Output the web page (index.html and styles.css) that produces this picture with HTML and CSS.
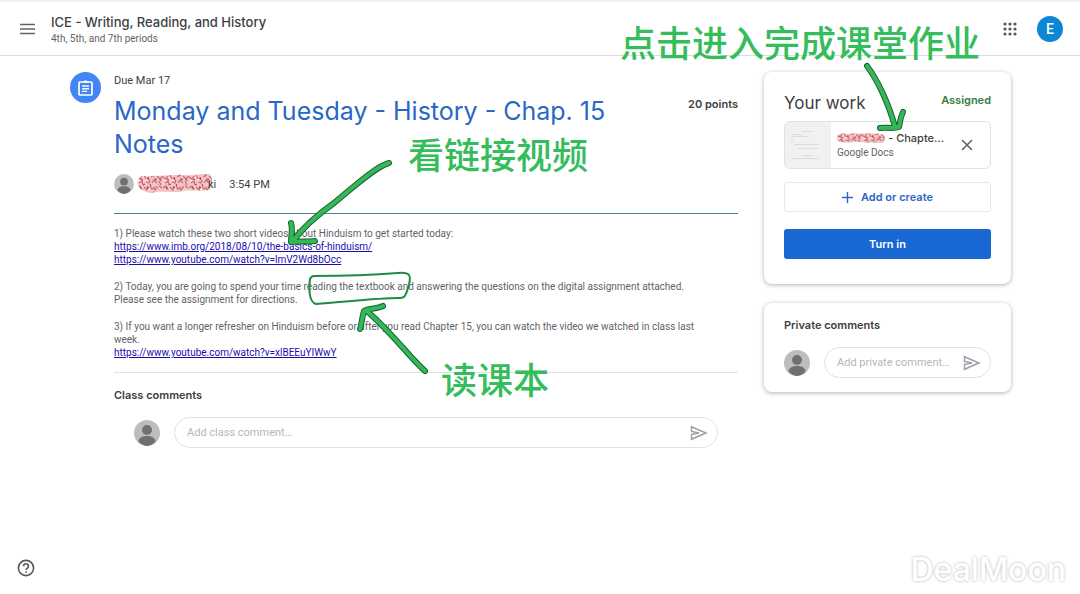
FILE: index.html
```html
<!DOCTYPE html>
<html lang="en">
  <head>
    <meta charset="utf-8">
    <title>ICE - Writing, Reading, and History</title>
    <link rel="stylesheet" href="styles.css">
  </head>
  <body>
    <svg class="defs" aria-hidden="true">
      <defs>
        <pattern id="scribble" width="26" height="17" patternUnits="userSpaceOnUse">
          <rect width="26" height="17" fill="#f2c6c9"/>
          <path d="M0 3l3 2 2-3M7 1l2 4 3-1M14 3l3-2 1 4M20 2l3 3 3-3M2 9l3-2 1 4M9 8l3 1 1-3M15 9l2-3 3 3M22 7l2 4M0 14l3-2 2 4M7 13l3 3 1-4M13 12l2 3 3-2M19 15l2-4 4 3" fill="none" stroke="#d3686d" stroke-width="1.3"/>
          <path d="M4 5l2 1M11 3l1 3M18 6l2-1M6 11l2-1M13 10l1 2M23 5l1 2M3 15l1-2M17 15l2 1M10 13l2 1" fill="none" stroke="#9c3b40"/>
          <path d="M1 6l2 1M8 6l2-1M17 3l2 0M20 11l2 1M11 16l2-1M6 3l1 1" fill="none" stroke="#fff"/>
        </pattern>
        <symbol id="avatar" viewBox="0 0 26 26">
          <circle cx="13" cy="13" r="13" fill="#bdbdbd"/>
          <circle cx="13" cy="10" r="5" fill="#707070"/>
          <path d="M4.500 21.500c0-7.300 17-7.300 17 0A13 13 0 0 1 13 26a13 13 0 0 1-8.500-4.500z" fill="#707070"/>
        </symbol>
        <symbol id="send" viewBox="0 0 18 16">
          <path d="M1.500 1.700L16 8 1.500 14.300V9.500L9 8 1.500 6.500z" fill="none" stroke="currentColor" stroke-width="1.500"/>
        </symbol>
      </defs>
    </svg>

    <header class="topbar">
      <button class="icon-btn" aria-label="Main menu">
        <svg width="16" height="12" viewBox="0 0 16 12"><path d="M0 1.500h15M0 6h15M0 10.500h15" stroke="#5f6368" stroke-width="1.700"/></svg>
      </button>
      <div class="course">
        <h2>ICE - Writing, Reading, and History</h2>
        <p>4th, 5th, and 7th periods</p>
      </div>
      <button class="icon-btn" aria-label="Google apps">
        <svg width="14" height="14" viewBox="0 0 14 14" fill="#55595e">
          <circle cx="2" cy="2" r="1.600"/><circle cx="7" cy="2" r="1.600"/><circle cx="12" cy="2" r="1.600"/>
          <circle cx="2" cy="7" r="1.600"/><circle cx="7" cy="7" r="1.600"/><circle cx="12" cy="7" r="1.600"/>
          <circle cx="2" cy="12" r="1.600"/><circle cx="7" cy="12" r="1.600"/><circle cx="12" cy="12" r="1.600"/>
        </svg>
      </button>
      <button class="account" aria-label="Account">E</button>
    </header>

    <main class="page">
      <div class="badge">
        <svg width="17" height="18" viewBox="0 0 17 18">
          <rect x="2" y="3" width="13" height="13" rx="1" fill="none" stroke="#fff" stroke-width="1.700"/>
          <path d="M5.500 3.500V2.200h1.600a1.500 1.500 0 0 1 2.800 0h1.600v1.300z" fill="#fff"/>
          <path d="M5 7h7M5 9.700h7M5 12.400h5" stroke="#fff" stroke-width="1.400"/>
        </svg>
      </div>

      <article class="assignment">
        <p class="due">Due Mar 17</p>
        <div class="title-row">
          <h1>Monday and Tuesday - History - Chap. 15 Notes</h1>
          <span class="points">20 points</span>
        </div>
        <div class="byline">
          <svg class="avatar-small" viewBox="0 0 26 26"><use href="#avatar"/></svg>
          <span class="teacher"><svg width="75" height="20" viewBox="0 0 75 20"><path d="M1 6C4 0 8 3 14 2c12 0 22-2 33-1 9 1 18-2 25-1 4 2 4 12 0 16-12 2-20-1-31 2-10 0-20-1-28 1C6 18-2 12 1 6z" fill="url(#scribble)"/></svg>ki</span>
          <span>3:54 PM</span>
        </div>

        <div class="instructions">
          <p>1) Please watch these two short videos about Hinduism to get started today:<br>
            <a href="#">https://www.imb.org/2018/08/10/the-basics-of-hinduism/</a><br>
            <a href="#">https://www.youtube.com/watch?v=lmV2Wd8bOcc</a></p>
          <p>2) Today, you are going to spend your time reading the textbook and answering the questions on the digital assignment attached. Please see the assignment for directions.</p>
          <p>3) If you want a longer refresher on Hinduism before or after you read Chapter 15, you can watch the video we watched in class last week.<br>
            <a href="#">https://www.youtube.com/watch?v=xlBEEuYIWwY</a></p>
        </div>

        <h3>Class comments</h3>
        <form class="comment class-comment">
          <svg class="avatar" viewBox="0 0 26 26"><use href="#avatar"/></svg>
          <div class="comment-box">
            <input type="text" aria-label="Add class comment" placeholder="Add class comment…">
            <button type="button" class="send" aria-label="Post"><svg width="18" height="16"><use href="#send"/></svg></button>
          </div>
        </form>
      </article>

      <aside class="side">
        <section class="card work">
          <div class="work-head">
            <h2>Your work</h2>
            <span class="status">Assigned</span>
          </div>
          <div class="attachment">
            <svg class="thumb" width="46" height="46" viewBox="0 0 46 46">
              <rect width="46" height="46" fill="#f1f1f1"/>
              <path d="M17 9.500h12M6 12.500h10M6 14.500h18M6 17.500h3M6 20.500h2M9 22.500h25M13 26.500h20M17 33.500h11M6 36.500h28" stroke="#dcdcdc"/>
            </svg>
            <div class="file">
              <a href="#"><svg width="50" height="12" viewBox="0 0 50 12"><path d="M1 3c5-4 10 0 16-2 10 1 20-1 30 1 4 2 3 7 0 9-10 0-18 0-27-1-7 1-12 1-18 0-3-2-3-5-1-7z" fill="url(#scribble)"/></svg> - Chapte...</a>
              <p>Google Docs</p>
            </div>
            <button class="icon-btn remove" aria-label="Remove attachment">
              <svg width="12" height="12" viewBox="0 0 12 12"><path d="M1 1l10 10M11 1L1 11" stroke="#5f6368" stroke-width="1.600"/></svg>
            </button>
          </div>
          <button class="btn add">
            <svg width="11" height="11" viewBox="0 0 11 11"><path d="M5.500 0v11M0 5.500h11" stroke="#2a66c4" stroke-width="1.400"/></svg>
            Add or create
          </button>
          <button class="btn turn-in">Turn in</button>
        </section>

        <section class="card private">
          <h3>Private comments</h3>
          <form class="comment">
            <svg class="avatar" viewBox="0 0 26 26"><use href="#avatar"/></svg>
            <div class="comment-box">
              <input type="text" aria-label="Add private comment" placeholder="Add private comment…">
              <button type="button" class="send" aria-label="Post"><svg width="18" height="16"><use href="#send"/></svg></button>
            </div>
          </form>
        </section>
      </aside>
    </main>

    <footer class="footer">
      <button class="icon-btn" aria-label="Help">
        <svg width="18" height="18" viewBox="0 0 18 18" fill="none" stroke="#55595e" stroke-width="1.600">
          <circle cx="9" cy="9" r="7.600"/>
          <path d="M6.600 7.200c0-3.200 4.900-3.200 4.900 0 0 1.800-2.400 1.900-2.400 3.800M9.100 12.200v1.600"/>
        </svg>
      </button>
      <span class="watermark">DealMoon</span>
    </footer>

    <!-- hand-drawn notes lying over the page -->
    <svg class="notes" width="1080" height="594" viewBox="0 0 1080 594">
      <g class="note-text">
        <text x="620" y="57">点击进入完成课堂作业</text>
        <text x="408" y="169">看链接视频</text>
        <text x="441" y="394">读课本</text>
      </g>
      <g class="outline">
        <path d="M389 163C376 166 350 190 334 203C320 213 304 226 293 241M291 223C293 229 291 235 291 242C299 241 307 242 315 241"/>
        <path d="M867 66C877 79 889 104 895 127M903 112C900 118 900 123 899 127C893 129 887 127 880 128"/>
        <path d="M425 371C411 359 395 336 367 311M383 306C377 309 369 308 364 311C362 317 362 323 360 329"/>
      </g>
      <g class="ink">
        <path d="M389 163C376 166 350 190 334 203C320 213 304 226 293 241M291 223C293 229 291 235 291 242C299 241 307 242 315 241"/>
        <path d="M867 66C877 79 889 104 895 127M903 112C900 118 900 123 899 127C893 129 887 127 880 128"/>
        <path d="M425 371C411 359 395 336 367 311M383 306C377 309 369 308 364 311C362 317 362 323 360 329"/>
      </g>
      <path class="ring" d="M313 276C338 276 374 275 398 273C411 272 411 276 409 285C406 294 406 298 399 298C377 298 344 302 316 304C308 302 309 285 310 279Q311 276 315 276"/>
    </svg>
  </body>
</html>
```
FILE: styles.css
```css
* { box-sizing: border-box; }
body {
  margin: 0;
  min-height: 100vh;
  display: flex;
  flex-direction: column;
  position: relative;
  background: #fff;
  color: #3c4043;
  font-family: Roboto, "Noto Sans CJK SC", sans-serif;
  font-size: 11px;
}
h1, h2, h3, p { margin: 0; font-weight: 400; }
h1, h2, h3, .points, .status, .btn, .file a { font-family: Inter, "Open Sans", sans-serif; }
button, input { font-family: inherit; font-size: inherit; border: none; background: none; padding: 0; }
button { cursor: pointer; }
svg { display: block; }
.defs { position: absolute; width: 0; height: 0; }

/* top bar */
.topbar {
  display: flex;
  align-items: center;
  height: 56px;
  padding: 0 17px 0 20px;
  border-top: 2px solid #f1f3f4;
  border-bottom: 1px solid #dadce0;
}
.icon-btn { display: flex; align-items: center; justify-content: center; }
.course { flex: 1; margin-left: 15px; padding-top: 3px; }
.course h2 { font-size: 13px; line-height: 17px; font-weight: 500; }
.course p { font-size: 10px; line-height: 15px; color: #5f6368; }
.account {
  width: 26px;
  height: 26px;
  margin-left: 20px;
  border-radius: 50%;
  background: #0d87d4;
  color: #fff;
  font-size: 14px;
  font-weight: 500;
}

/* page columns */
.page {
  display: grid;
  grid-template-columns: 31px minmax(0, 1fr) 247px;
  padding: 16px 69px 0 70px;
}
.badge {
  display: flex;
  align-items: center;
  justify-content: center;
  width: 31px;
  height: 31px;
  border-radius: 50%;
  background: #4285f4;
}
.assignment { margin: 0 26px 0 13px; }
.due { padding-top: 1px; font-size: 11px; line-height: 16px; }
.title-row { display: flex; align-items: flex-start; padding-top: 6px; }
.title-row h1 { flex: 1; padding-right: 60px; font-size: 25px; line-height: 33px; color: #2967c8; }
.points { padding-top: 1px; line-height: 16px; font-weight: 600; }
.byline {
  display: flex;
  align-items: center;
  gap: 13px;
  height: 53px;
  padding-bottom: 6px;
  border-bottom: 1px solid #4f8494;
}
.avatar-small { width: 20px; height: 20px; margin-right: -10px; }
.teacher { display: flex; align-items: center; }
.teacher svg { margin-right: -4px; }

.instructions {
  padding: 13px 32px 13px 0;
  border-bottom: 1px solid #dfe1e3;
  font-size: 10px;
  line-height: 13px;
  color: #5f6368;
}
.instructions p + p { margin-top: 14px; }
.instructions a { color: #1a0dab; }

h3 { font-size: 11px; line-height: 16px; font-weight: 600; }
.assignment h3 { margin-top: 14px; }

/* comments */
.comment { display: flex; align-items: center; gap: 14px; }
.class-comment { padding: 14px 20px 0; }
.avatar { width: 26px; height: 26px; flex: none; }
.comment-box {
  display: flex;
  align-items: center;
  flex: 1;
  min-width: 0;
  height: 31px;
  padding: 0 9px 0 12px;
  border: 1px solid #dfe1e3;
  border-radius: 16px;
}
.comment-box input { flex: 1; min-width: 0; outline: none; }
.comment-box input::placeholder { color: #b4b7bb; }
.send { color: #9aa0a6; }

/* side cards */
.card {
  padding: 20px;
  border-radius: 8px;
  background: #fff;
  box-shadow: 0 1px 4px rgba(60, 64, 67, .4);
}
.work { padding-bottom: 25px; }
.work-head { display: flex; justify-content: space-between; }
.work-head h2 { font-size: 17px; line-height: 22px; }
.status { line-height: 16px; font-weight: 600; color: #3a7d3e; }
.attachment {
  display: flex;
  align-items: center;
  height: 48px;
  margin-top: 7px;
  border: 1px solid #dfe1e3;
  border-radius: 6px;
  overflow: hidden;
}
.thumb { flex: none; }
.file { flex: 1; min-width: 0; padding-left: 6px; }
.file a {
  display: flex;
  align-items: center;
  gap: 3px;
  line-height: 15px;
  font-weight: 500;
  color: #3c4043;
  text-decoration: none;
  white-space: nowrap;
}
.file p { font-size: 10px; line-height: 14px; color: #5f6368; }
.remove { width: 46px; height: 46px; }
.btn {
  display: flex;
  align-items: center;
  justify-content: center;
  gap: 8px;
  width: 100%;
  height: 30px;
  border-radius: 3px;
  font-size: 11px;
  font-weight: 600;
}
.add { margin-top: 13px; border: 1px solid #e4e6e8; color: #2a66c4; }
.turn-in { margin-top: 17px; background: #1967d2; color: #fff; }
.private { margin-top: 19px; padding: 14px 20px; }
.private .comment { margin-top: 14px; }

/* footer */
.footer {
  display: flex;
  align-items: flex-start;
  justify-content: space-between;
  margin-top: auto;
  padding: 0 14px 4px 17px;
}
.footer .icon-btn { margin-top: 10px; }
.watermark {
  font-family: Inter, sans-serif;
  font-size: 32px;
  line-height: 41px;
  font-weight: 500;
  color: #fff;
  text-shadow: 0 0 3px rgba(0, 0, 0, .3);
}

/* notes */
.notes { position: absolute; top: 0; left: 0; pointer-events: none; }
.note-text {
  fill: #35bd5b;
  font-family: "Noto Sans CJK SC", sans-serif;
  font-size: 36px;
  font-weight: 500;
}
.outline, .ink, .ring { fill: none; stroke-linecap: round; stroke-linejoin: round; }
.outline { stroke: #17632f; stroke-width: 6px; }
.ink { stroke: #34b857; stroke-width: 4px; }
.ring { stroke: #1f8a43; stroke-width: 2px; }
```
